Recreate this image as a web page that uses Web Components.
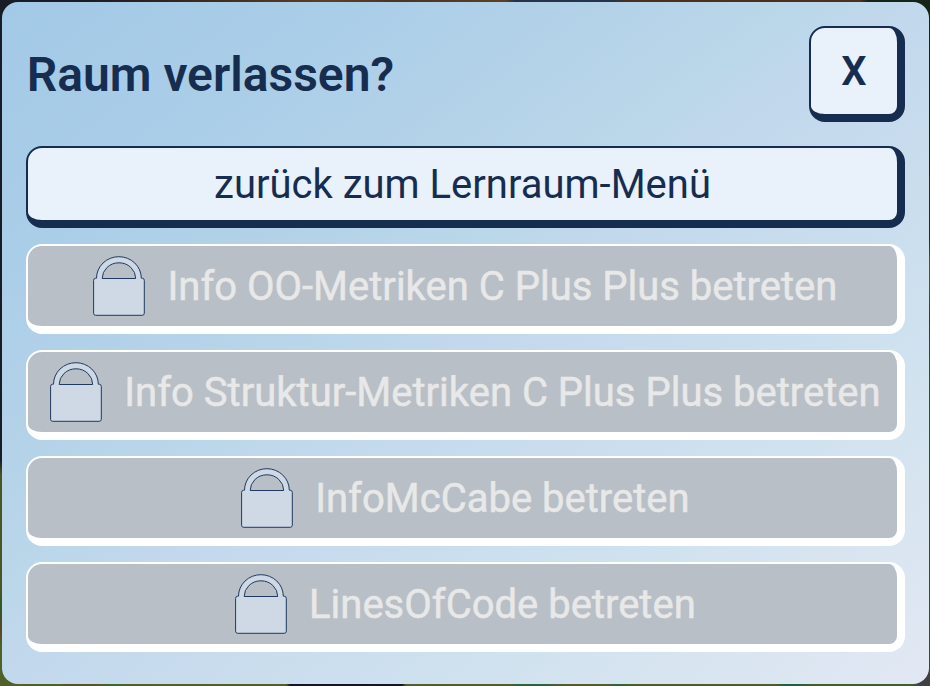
<!DOCTYPE html>
<html lang="de"><head><meta charset="utf-8"><title>Raum verlassen?</title>
<style>
html,body{margin:0;height:100%;overflow:hidden}
body{font-family:Roboto,sans-serif;color:#172d4f}
</style></head><body>
<room-backdrop>
<room-dialog heading="Raum verlassen?">
<menu-button>zurück zum Lernraum-Menü</menu-button>
<menu-button locked>Info OO-Metriken C Plus Plus betreten</menu-button>
<menu-button locked>Info Struktur-Metriken C Plus Plus betreten</menu-button>
<menu-button locked>InfoMcCabe betreten</menu-button>
<menu-button locked>LinesOfCode betreten</menu-button>
</room-dialog>
</room-backdrop>
<script>
const shadow=(el,html)=>{el.attachShadow({mode:'open'}).innerHTML=html;return el.shadowRoot};

customElements.define('room-backdrop',class extends HTMLElement{
constructor(){super();shadow(this,`<style>
:host{display:block;box-sizing:border-box;width:930px;height:686px;padding:2px 1px 2px 2px;
background:
linear-gradient(90deg,#181c26 0 80px,#2c2222 150px,#4a3424 260px,#5a4028 330px,#4a3424 400px,#5a4028 505px,#25344a 515px,#25344a 610px,#4b3020 630px 860px,#152418 868px) 0 0/100% 3px no-repeat,
linear-gradient(90deg,#4f6028 0 60px,#5a5028 65px 95px,#3f6630 110px 120px,#4f6028 130px 286px,#12162a 290px 402px,#4f6028 406px 510px,#2a643a 518px 545px,#5a5a28 565px 605px,#2a643a 618px,#4f5c28 635px 775px,#20603c 785px 800px,#3f6028 812px 910px,#404044 920px) 0 100%/100% 3px no-repeat,
linear-gradient(#181c26 0 460px,#4a5524 475px 590px,#2c5a28 605px,#5a4428 630px,#4f6028 645px) 0 0/20px 100% no-repeat,
linear-gradient(#152418 0 170px,#3a2424 180px,#1c2e28 190px 240px,#4a5528 260px 290px,#2a3a24 320px,#345024 360px 600px,#404044 640px) 100% 0/20px 100% no-repeat}
</style><slot></slot>`)}});

customElements.define('lock-icon',class extends HTMLElement{
constructor(){super();shadow(this,`<style>:host{display:block;width:54px;height:62px}svg{display:block}</style>
<svg width="54" height="62" viewBox="0 0 54 62" fill="#cfd9e6" stroke="#203960" stroke-width="1">
<path fill-rule="evenodd" d="M4.5 23.2A22.4 21.5 0 0 1 49.3 23.2H50.3Q52.3 23.4 52.3 25.4V58.2Q52.3 60.3 50.2 60.3H3.7Q1.6 60.3 1.6 58.2V25.4Q1.6 23.4 3.6 23.2ZM10.2 23.5H43.7A16.75 15.7 0 0 0 10.2 23.5Z"/></svg>`)}});

customElements.define('menu-button',class extends HTMLElement{
constructor(){super();const locked=this.hasAttribute('locked');shadow(this,`<style>
:host{display:block}
button{display:flex;align-items:center;justify-content:center;gap:21.2px;box-sizing:border-box;width:100%;height:82px;margin:0;padding:2px 0 0;border:solid #172d4f;border-width:2px 8px 8px 2px;border-radius:16px;background:#e9f1fb;color:#172d4f;font:400 40px/1 Roboto,sans-serif;white-space:nowrap}
:host([locked]) button{height:90px;padding:0 0 0 4.6px;border-color:#fff;background:#b8bfc7;color:#e8e8e8}
:host([locked]) span{padding-top:2px;-webkit-text-stroke:.5px #e8e8e8}
:host([close]) button{width:96px;height:96px;padding:2px 0 0;font-weight:600}
</style><button>${locked?'<lock-icon></lock-icon>':''}<span><slot></slot></span></button>`)}});

customElements.define('room-dialog',class extends HTMLElement{
constructor(){super();shadow(this,`<style>
:host{display:flex;flex-direction:column;box-sizing:border-box;height:682px;padding:24px;border-radius:16px;
background:linear-gradient(to bottom right,#a2c9e7 0%,#abcee8 20%,#b3d2e8 32%,#bbd7ea 43.5%,#c2d8ec 49.5%,#d0e2ef 75%,#e2e8f3 100%)}
header{display:flex;justify-content:space-between;align-items:center;height:96px;margin-bottom:24px}
h1{margin:0;padding:2px 0 0 .7px;font:600 48px/56px Roboto,sans-serif}
main{display:flex;flex-direction:column;gap:16px}
</style><header><h1></h1><menu-button close>X</menu-button></header><main><slot></slot></main>`)
.querySelector('h1').textContent=this.getAttribute('heading')}});
</script></body></html>
